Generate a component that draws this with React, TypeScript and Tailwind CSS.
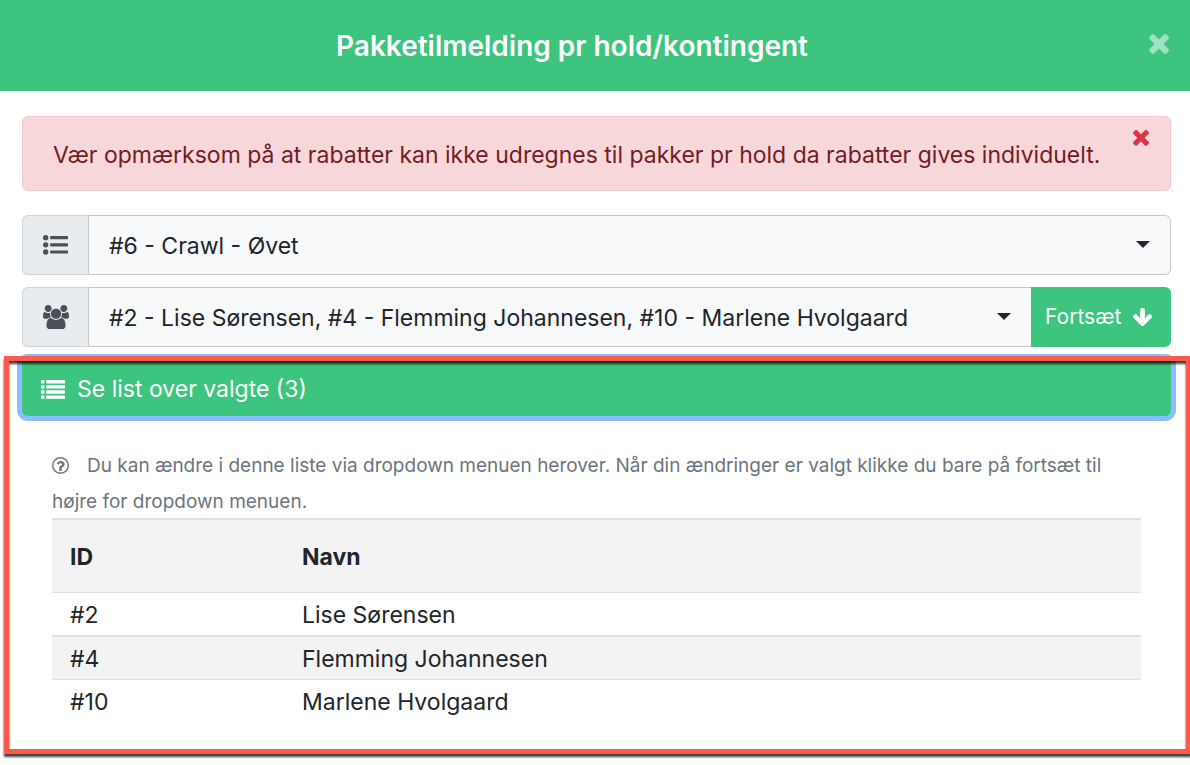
import { useState } from "react";
import type { ReactNode } from "react";

type Member = { id: string; name: string };

const members: Member[] = [
  { id: "#2", name: "Lise Sørensen" },
  { id: "#4", name: "Flemming Johannesen" },
  { id: "#10", name: "Marlene Hvolgaard" },
];

const selectedMembers = members.map((member) => `${member.id} - ${member.name}`).join(", ");

function TimesIcon({ className }: { className: string }) {
  return (
    <svg aria-hidden viewBox="302 302 1188 1252" fill="currentColor" className={className}>
      <path d="M1490 1322q0 40-28 68l-136 136q-28 28-68 28t-68-28l-294-294-294 294q-28 28-68 28t-68-28l-136-136q-28-28-28-68t28-68l294-294-294-294q-28-28-28-68t28-68l136-136q28-28 68-28t68 28l294 294 294-294q28-28 68-28t68 28l136 136q28 28 28 68t-28 68l-294 294 294 294q28 28 28 68z" />
    </svg>
  );
}

function BulletListIcon() {
  return (
    <svg aria-hidden viewBox="0 0 1792 1408" fill="currentColor" className="w-[25px]">
      {[192, 704, 1216].map((y) => (
        <g key={y}>
          <circle cx="192" cy={y} r="192" />
          <rect x="512" y={y - 112} width="1280" height="224" rx="32" />
        </g>
      ))}
    </svg>
  );
}

function ListIcon() {
  return (
    <svg aria-hidden viewBox="0 0 1792 1408" fill="currentColor" className="w-6">
      {[0, 384, 768, 1152].map((y) => (
        <g key={y}>
          <rect y={y} width="256" height="256" rx="32" />
          <rect x="384" y={y} width="1408" height="256" rx="32" />
        </g>
      ))}
    </svg>
  );
}

function UsersIcon() {
  return (
    <svg aria-hidden viewBox="0 0 1920 1792" fill="currentColor" className="w-[26px]">
      <path d="M593 896q-162 5-265 128h-134q-82 0-138-40.500t-56-118.500q0-353 124-353 6 0 43.500 21t97.500 42.500 119 21.500q67 0 133-23-5 37-5 66 0 139 81 256zM1664 1533q0 120-73 189.500t-194 69.500h-874q-121 0-194-69.500t-73-189.500q0-53 3.500-103.500t14-109 26.500-108.500 43-97.500 62-81 85.500-53.500 111.500-20q10 0 43 21.500t73 48 107 48 135 21.500 135-21.500 107-48 73-48 43-21.500q61 0 111.500 20t85.500 53.500 62 81 43 97.500 26.500 108.500 14 109 3.500 103.500zM640 256q0 106-75 181t-181 75-181-75-75-181 75-181 181-75 181 75 75 181zM1344 640q0 159-112.500 271.500t-271.500 112.500-271.500-112.500-112.500-271.500 112.500-271.500 271.500-112.500 271.500 112.500 112.500 271.500zM1920 865q0 78-56 118.500t-138 40.500h-134q-103-123-265-128 81-117 81-256 0-29-5-66 66 23 133 23 59 0 119-21.500t97.500-42.500 43.500-21q124 0 124 353zM1792 256q0 106-75 181t-181 75-181-75-75-181 75-181 181-75 181 75 75 181z" />
    </svg>
  );
}

function ArrowDownIcon() {
  return (
    <svg aria-hidden viewBox="117 128 1558 1483" fill="currentColor" className="w-[19px]">
      <path d="M1675 832q0 53-37 90l-651 652q-39 37-91 37-53 0-90-37l-651-652q-38-36-38-90 0-53 38-91l74-75q39-37 91-37 53 0 90 37l294 294v-704q0-52 38-90t90-38h128q52 0 90 38t38 90v704l294-294q37-37 90-37 52 0 91 37l75 75q37 39 37 91z" />
    </svg>
  );
}

function QuestionIcon() {
  return (
    <svg aria-hidden viewBox="0 0 1536 1536" fill="currentColor" className="mr-[18px] inline-block w-[17px] align-[-2px]">
      <circle cx="768" cy="768" r="704" fill="none" stroke="currentColor" strokeWidth="128" />
      <path d="M880 1072v160q0 14-9 23t-23 9h-160q-14 0-23-9t-9-23v-160q0-14 9-23t23-9h160q14 0 23 9t9 23zM1136 672q0 50-15 90t-45.500 69-52 44-59.500 36q-32 18-46.500 28t-26 24-11.500 29v32q0 14-9 23t-23 9h-160q-14 0-23-9t-9-23v-68q0-35 10.500-64.500t24-47.500 39-35.500 41-25.500 44.500-21q53-25 75-43t22-49q0-42-43.500-71.500t-95.500-29.500q-56 0-95 27-29 20-80 83-9 12-25 12-11 0-19-6l-108-82q-10-7-12-20t5-23q122-192 349-192 129 0 238.500 89.500t109.500 214.500z" />
    </svg>
  );
}

type SelectRowProps = {
  id: string;
  label: string;
  icon: ReactNode;
  value: string;
  action?: ReactNode;
};

function SelectRow({ id, label, icon, value, action }: SelectRowProps) {
  return (
    <div className="flex h-[60px]">
      <label htmlFor={id} aria-label={label} className="flex w-[67px] shrink-0 items-center justify-center rounded-l-md border border-[#ced4da] border-r-[#c8c8c8] bg-[#e9ecef] text-[#495057]">
        {icon}
      </label>
      <div className="relative min-w-0 flex-1">
        <select
          id={id}
          className={`h-full w-full appearance-none truncate border-y border-[#c8c8c8] bg-[#f8f9fa] pt-0.5 pr-12 pl-5 text-[23px] text-[#212529] ${action ? "" : "rounded-r-md border-r"}`}
        >
          <option>{value}</option>
        </select>
        <svg aria-hidden viewBox="0 0 14 7" fill="#212529" className={`pointer-events-none absolute top-[26px] w-[14px] ${action ? "right-5" : "right-[21px]"}`}>
          <path d="M0 0h14L7 7z" />
        </svg>
      </div>
      {action}
    </div>
  );
}

export default function App() {
  const [showAlert, setShowAlert] = useState(true);
  const [showList, setShowList] = useState(true);

  return (
    <div className="min-h-screen overflow-hidden bg-white font-['Inter',sans-serif] text-[23px] text-[#212529]">
      <header className="relative flex h-[91px] items-center justify-center bg-[#3dc47e] pr-[46px] text-white">
        <h1 className="text-[28px] font-semibold">Pakketilmelding pr hold/kontingent</h1>
        <button type="button" aria-label="Luk" className="absolute top-[33px] right-[21px] text-white/50">
          <TimesIcon className="w-5" />
        </button>
      </header>

      <main className="pt-[25px] pr-[19px] pb-2 pl-[22px]">
        {showAlert ? (
          <div role="alert" className="relative mb-6 flex min-h-[75px] items-center rounded-md border border-[#f5c6cb] bg-[#f8d7da] px-[30px] pt-1 text-[#721c24]">
            <p>Vær opmærksom på at rabatter kan ikke udregnes til pakker pr hold da rabatter gives individuelt.</p>
            <button type="button" aria-label="Luk besked" onClick={() => setShowAlert(false)} className="absolute top-3 right-[21px] text-[#dc3545]">
              <TimesIcon className="w-4" />
            </button>
          </div>
        ) : null}

        <div className="flex flex-col gap-3">
          <SelectRow id="team" label="Hold" icon={<BulletListIcon />} value="#6 - Crawl - Øvet" />
          <SelectRow
            id="members"
            label="Medlemmer"
            icon={<UsersIcon />}
            value={selectedMembers}
            action={
              <button type="button" className="flex w-[140px] shrink-0 items-center gap-3 rounded-r-md bg-[#3dc47e] pl-3.5 text-[21px] text-white">
                Fortsæt
                <ArrowDownIcon />
              </button>
            }
          />

          <section className="relative pb-8">
            <button
              type="button"
              aria-expanded={showList}
              onClick={() => setShowList(!showList)}
              className="flex h-[57px] w-full items-center gap-3 rounded-md bg-[#3dc47e] px-[19px] pt-1 text-left text-white ring-5 ring-[#8abdff]"
            >
              <ListIcon />
              Se list over valgte ({members.length})
            </button>

            {showList ? (
              <div className="px-[30px] pt-8">
                <p className="-mb-0.5 text-[19px] leading-9 text-[#6c757d]">
                  <QuestionIcon />
                  Du kan ændre i denne liste via dropdown menuen herover. Når din ændringer er valgt klikke du bare på fortsæt til højre for dropdown menuen.
                </p>
                <table className="w-full border-separate border-spacing-0 text-left">
                  <thead>
                    <tr className="h-[74px] bg-[#f3f3f3]">
                      <th className="w-[232px] border-t-2 border-[#dee2e6] px-[18px] pt-0.5 font-bold">ID</th>
                      <th className="border-t-2 border-[#dee2e6] px-[18px] pt-0.5 font-bold">Navn</th>
                    </tr>
                  </thead>
                  <tbody>
                    {members.map((member) => (
                      <tr key={member.id} className="group h-[43px] even:h-11 even:bg-[#f3f3f3]">
                        <td className="border-t border-[#dee2e6] px-[18px] pt-0.5 group-even:border-t-2">{member.id}</td>
                        <td className="border-t border-[#dee2e6] px-[18px] pt-0.5 group-even:border-t-2">{member.name}</td>
                      </tr>
                    ))}
                  </tbody>
                </table>
              </div>
            ) : null}

            {/* highlight frame around the member list */}
            <div aria-hidden className="pointer-events-none absolute -top-[3px] -right-5 bottom-0 -left-[18px] border-5 border-[#ff5a4c] drop-shadow-[0_3px_1px_rgba(0,0,0,0.75)]" />
          </section>
        </div>
      </main>
    </div>
  );
}
